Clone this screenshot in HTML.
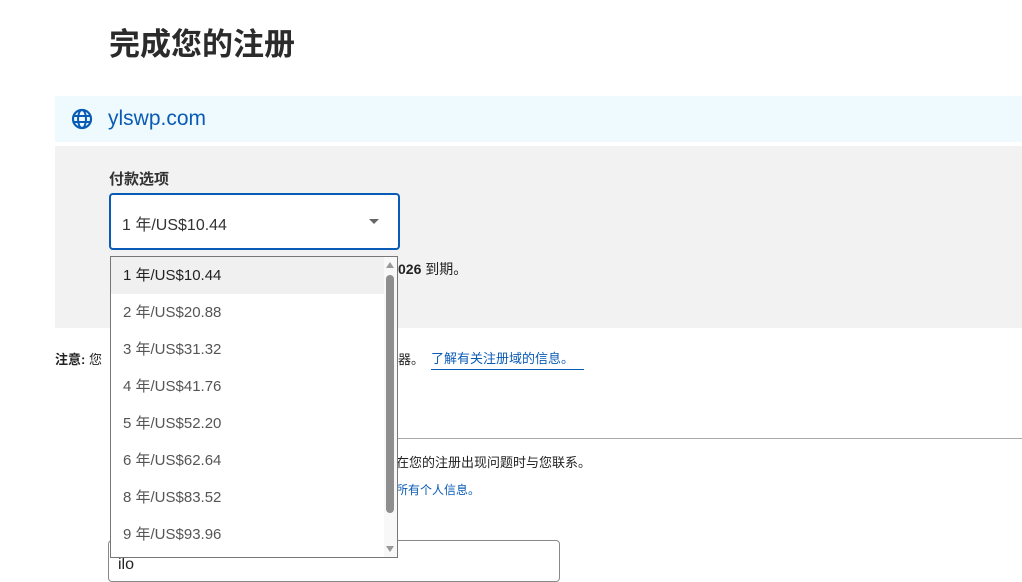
<!DOCTYPE html>
<html><head><meta charset="utf-8"><style>
body{margin:0;width:1022px;height:570px;overflow:hidden;background:#fff;font-family:"Liberation Sans","Noto Sans CJK SC",sans-serif;color:#222;position:relative}
.a{position:absolute}
h1{position:absolute;left:109px;top:27px;margin:0;font-size:31px;font-weight:bold;color:#2b2b2b;line-height:36px}
.opt{position:absolute;left:12px;font-size:15px;color:#555}
</style></head><body>
<h1>完成您的注册</h1>
<div class="a" style="left:55px;top:96px;width:967px;height:46px;background:#eefafd"></div>
<svg class="a" style="left:71px;top:108px" width="22" height="22" viewBox="0 0 22 22"><circle cx="11" cy="11" r="9" fill="none" stroke="#0a5bb5" stroke-width="2.2"/><ellipse cx="11" cy="11" rx="4" ry="9" fill="none" stroke="#0a5bb5" stroke-width="2"/><path d="M2 8h18M2 14h18" stroke="#0a5bb5" stroke-width="2"/></svg>
<div class="a" style="left:108px;top:107px;font-size:21px;color:#0a5bb5">ylswp.com</div>
<div class="a" style="left:55px;top:146px;width:967px;height:182px;background:#f2f2f2"></div>
<div class="a" style="left:109px;top:168px;font-size:15px;font-weight:bold;color:#333">付款选项</div>
<div class="a" style="left:109px;top:193px;width:287px;height:53px;border:2px solid #0a5bb5;border-radius:4px;background:#fff"></div>
<div class="a" style="left:122px;top:211px;font-size:16px;color:#333">1 年/US$10.44</div>
<div class="a" style="left:369px;top:219px;width:0;height:0;border-left:5px solid transparent;border-right:5px solid transparent;border-top:5px solid #666"></div>
<div class="a" style="left:398px;top:259px;font-size:14px;color:#222"><b>026</b> 到期。</div>
<div class="a" style="left:55px;top:349px;font-size:13px;color:#222"><b>注意:</b> 您</div>
<div class="a" style="left:398px;top:349px;font-size:13px;color:#222">器。</div>
<div class="a" style="left:431px;top:348px;font-size:13px;color:#0a5bb5;border-bottom:1px solid #0a5bb5;padding-bottom:2px;width:153px">了解有关注册域的信息。</div>
<div class="a" style="left:398px;top:438px;width:624px;height:1px;background:#aaa"></div>
<div class="a" style="left:396px;top:452px;font-size:13px;color:#222">在您的注册出现问题时与您联系。</div>
<div class="a" style="left:396px;top:481px;font-size:12px;color:#0a5bb5">所有个人信息。</div>
<div class="a" style="left:108px;top:540px;width:450px;height:40px;border:1px solid #888;border-radius:4px;background:#fff"></div>
<div class="a" style="left:118px;top:556px;font-size:16px;color:#222">ilo</div>
<div class="a" style="left:110px;top:256px;width:286px;height:300px;border:1px solid #777;background:#fff">
<div class="a" style="left:0;top:0;width:273px;height:37px;background:#f0f0f0"></div>
<div class="opt" style="top:7px;color:#222">1 年/US$10.44</div>
<div class="opt" style="top:44px">2 年/US$20.88</div>
<div class="opt" style="top:81px">3 年/US$31.32</div>
<div class="opt" style="top:118px">4 年/US$41.76</div>
<div class="opt" style="top:155px">5 年/US$52.20</div>
<div class="opt" style="top:192px">6 年/US$62.64</div>
<div class="opt" style="top:229px">8 年/US$83.52</div>
<div class="opt" style="top:266px">9 年/US$93.96</div>
<div class="a" style="left:273px;top:0;width:13px;height:300px;background:#f8f8f8"></div>
<div class="a" style="left:275px;top:5px;border-left:4px solid transparent;border-right:4px solid transparent;border-bottom:6px solid #999"></div>
<div class="a" style="left:275px;top:18px;width:8px;height:238px;background:#8e8e8e;border-radius:4px"></div>
<div class="a" style="left:275px;top:289px;border-left:4px solid transparent;border-right:4px solid transparent;border-top:6px solid #999"></div>
</div>
</body></html>
